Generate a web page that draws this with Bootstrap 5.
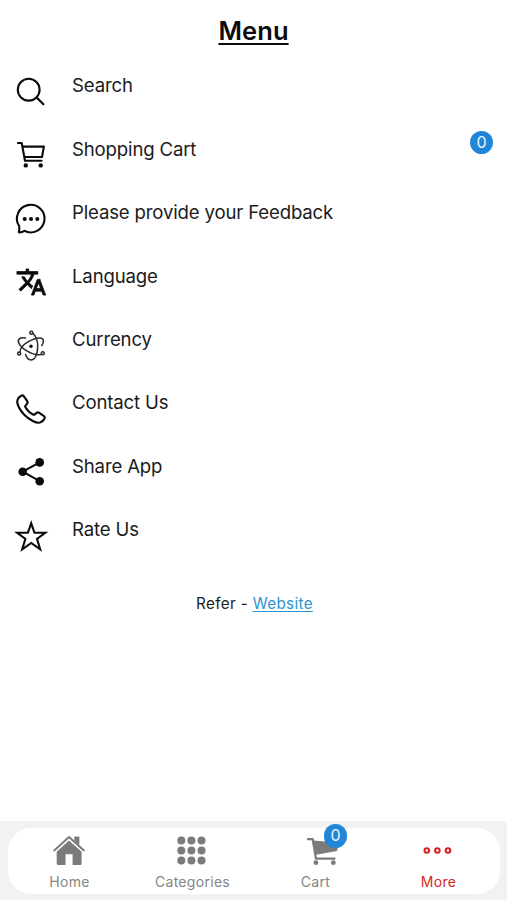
<!DOCTYPE html>
<html lang="en">
<head>
<meta charset="utf-8">
<meta name="viewport" content="width=device-width, initial-scale=1">
<title>Menu</title>
<link href="https://cdn.jsdelivr.net/npm/bootstrap@5.3.0/dist/css/bootstrap.min.css" rel="stylesheet">
<style>
body{font-family:Inter,sans-serif;color:#1b1b1b;height:900px;overflow:hidden}
.page-title{font-size:25.5px;font-weight:600;line-height:32px;padding-top:15px;height:60.3px;color:#0c0c0c;letter-spacing:.1px;text-decoration:underline;text-decoration-thickness:2px;text-underline-offset:3px;text-decoration-skip-ink:none}
.menu-row{height:63.4px;padding:13.7px 14px 0 13px}
.glyph{width:36px;height:36px;overflow:visible;flex:none;fill:none;stroke:#0a0a0a;stroke-width:2.1;stroke-linecap:round;stroke-linejoin:round}
.glyph .solid{fill:#0a0a0a;stroke:none}
.menu-text{font-size:18.6px;line-height:24px;letter-spacing:-.16px;margin-left:23px;margin-top:-.5px;white-space:nowrap}
.count{background:#2186d8;color:#e9f6ff;width:23px;height:23px;font-size:16px;line-height:23px;border-radius:50%;text-align:center}
.row-count{margin-top:-6px}
.refer{font-size:15.2px;line-height:20px;letter-spacing:.36px;margin-top:27px;padding-left:2px}
.refer a{color:#2b93cd;text-underline-offset:2px;text-decoration-skip-ink:none}
.dock{background:#f2f2f2;height:79px;padding:7px 7px 6px 8px}
.dock-pill{border-radius:23px;height:66px}
.dock-item{color:#858585;font-size:14px;letter-spacing:.3px;line-height:18px;padding-top:5px;text-decoration:none}
.dock-item .glyph{stroke:none;fill:#7b7b7b;margin-right:1.6px}
.dock-item.active{color:#d91f26}
.dock-item .caption{margin-top:4px}
.dock-count{position:absolute;left:27px;top:-9px;width:23.5px;height:23.5px;line-height:23.5px;letter-spacing:0}
</style>
<script src="https://cdn.jsdelivr.net/npm/bootstrap@5.3.0/dist/js/bootstrap.bundle.min.js"></script>
</head>
<body class="bg-white d-flex flex-column">
<h1 class="page-title text-center m-0">Menu</h1>
<main class="flex-grow-1">
<ul class="list-unstyled m-0">
<li class="menu-row d-flex align-items-start"><svg class="glyph" viewBox="0 0 36 36"><circle cx="15.7" cy="15.7" r="10.9"/><path d="M23.5 23.4L30.4 30.2" stroke-width="2.2"/></svg><span class="menu-text">Search</span></li>
<li class="menu-row d-flex align-items-start"><svg class="glyph" viewBox="0 0 36 36"><path d="M4.900 6H8.700L12 23.800H28.600M9.700 9.600H30.900L29 20H11.400"/><circle class="solid" cx="12.800" cy="28.400" r="2.200"/><circle class="solid" cx="27.700" cy="28.400" r="2.200"/></svg><span class="menu-text">Shopping Cart</span><span class="count row-count ms-auto">0</span></li>
<li class="menu-row d-flex align-items-start"><svg class="glyph" viewBox="0 0 36 36"><path d="M11.300 29.800C9.200 31.200 7.300 31.600 5.800 31.300C6.500 29.200 6.600 27.200 6.100 25A13.800 13.800 0 1 1 11.300 29.800Z"/><g class="solid"><circle cx="11.700" cy="17.900" r="2"/><circle cx="18" cy="17.900" r="2"/><circle cx="24.300" cy="17.900" r="2"/></g></svg><span class="menu-text">Please provide your Feedback</span></li>
<li class="menu-row d-flex align-items-start"><svg class="glyph" viewBox="0 0 36 36"><path transform="translate(2.6 2.3) scale(1.31)" fill="#0a0a0a" stroke-width=".55" d="M12.87 15.07l-2.54-2.51.03-.03c1.74-1.94 2.98-4.17 3.71-6.53H17V4h-7V2H8v2H1v1.99h11.17C11.5 7.92 10.44 9.75 9 11.35 8.07 10.32 7.3 9.19 6.69 8h-2c.73 1.63 1.73 3.17 2.98 4.56l-5.09 5.02L4 19l5-5 3.11 3.11.76-2.04zM18.5 10h-2L12 22h2l1.12-3h4.75L21 22h2l-4.500-12zm-2.620 7l1.620-4.330L19.120 17h-3.240z"/></svg><span class="menu-text">Language</span></li>
<li class="menu-row d-flex align-items-start"><svg class="glyph" viewBox="0 0 36 36"><g style="stroke:#2b2b2b;stroke-width:1.500"><path d="M20.100 5.600C23 8 24.700 13 24.700 18.500C24.700 22.700 23.800 26.500 22.300 29M12.600 26.500C13.600 30 15.600 31.900 18 31.900C19.400 31.900 20.600 31.300 21.500 30.200"/><path d="M7 24C7 20.500 10.500 16.500 15.300 13.600C19.500 11.100 24 9.700 27 9.900C30.900 10.200 31.500 13.500 28.700 17.500"/><path d="M28 26.400C24.500 27.300 19 25.800 14.300 23.100C10.500 20.900 7.300 18 5.900 15.300C4 11.500 6.800 9.200 12.500 10"/><circle cx="18.300" cy="4.800" r="1.500"/><circle cx="6.200" cy="25.500" r="1.500"/><circle cx="29.800" cy="25.300" r="1.500"/></g><circle class="solid" cx="18" cy="18.300" r="1.700"/></svg><span class="menu-text">Currency</span></li>
<li class="menu-row d-flex align-items-start"><svg class="glyph" viewBox="0 0 36 36"><path d="M4.400 9.300C5 7.200 6.700 5.400 8.600 4.500C9.500 4.100 10.200 4.400 10.900 5.300L14.100 9.900C15 11.300 14.800 12.300 13.600 13.300C12.500 14.200 11.800 14.800 12.500 16.200C14 19 17 22 20 23.500C21.300 24.100 21.900 23.600 22.800 22.500C23.800 21.200 24.900 21 26.300 21.900L31 25.100C31.900 25.800 32.100 26.500 31.600 27.500C30.700 29.300 28.900 31 26.900 31.600C23.500 32.400 16.500 29 11.500 24C6.500 19 3.500 12.600 4.400 9.300Z"/></svg><span class="menu-text">Contact Us</span></li>
<li class="menu-row d-flex align-items-start"><svg class="glyph" viewBox="0 0 36 36"><path d="M26.700 8.300L9.700 17.700L26.700 27.200"/><g class="solid"><circle cx="26.700" cy="8.400" r="4.300"/><circle cx="9.700" cy="17.700" r="4.300"/><circle cx="26.700" cy="27.200" r="4.300"/></g></svg><span class="menu-text">Share App</span></li>
<li class="menu-row d-flex align-items-start"><svg class="glyph" viewBox="0 0 36 36"><path style="stroke-linejoin:miter" d="M18.200 5.300L21.500 14.800H32.200L24 20.900L27.200 31.300L18.200 25L9.200 31.300L12.400 20.900L4.200 14.800H14.900Z"/></svg><span class="menu-text">Rate Us</span></li>
</ul>
<p class="refer text-center mb-0">Refer - <a href="#">Website</a></p>
</main>
<nav class="dock">
<div class="dock-pill bg-white d-flex">
<a class="dock-item col-3 d-flex flex-column align-items-center" href="#"><svg class="glyph" viewBox="0 0 36 36"><path d="M18 7.500L30.600 18.800V30.500Q30.600 32 29.100 32H21.600V21.300H14.500V32H7.200Q5.700 32 5.700 30.500V18.800Z"/><path d="M23.500 3.800H28.200V14L23.500 10Z"/><path d="M3.200 17.400L18 4.100L32.900 17.400" style="fill:none;stroke:#fff;stroke-width:3.800"/><path d="M23.500 3.800H28.200V12L23.500 8Z"/><path d="M3.200 17.400L18 4.100L32.900 17.400" style="fill:none;stroke:#7b7b7b;stroke-width:2"/></svg><span class="caption">Home</span></a>
<a class="dock-item col-3 d-flex flex-column align-items-center" href="#"><svg class="glyph" viewBox="0 0 36 36"><circle cx="7.300" cy="7.400" r="4"/><circle cx="17.400" cy="7.400" r="4"/><circle cx="27.500" cy="7.400" r="4"/><circle cx="7.300" cy="17.500" r="4"/><circle cx="17.400" cy="17.500" r="4"/><circle cx="27.500" cy="17.500" r="4"/><circle cx="7.300" cy="27.600" r="4"/><circle cx="17.400" cy="27.600" r="4"/><circle cx="27.500" cy="27.600" r="4"/></svg><span class="caption">Categories</span></a>
<a class="dock-item col-3 d-flex flex-column align-items-center" href="#"><span class="position-relative d-block lh-1"><svg class="glyph d-block" viewBox="0 0 36 36"><path d="M16.200 7.500L41.400 9.500L40.200 18L18.700 21.700Z"/><path d="M11 6.200H15.700L19 25.600H37.500" style="fill:none;stroke:#7b7b7b;stroke-width:2.300"/><circle cx="18.900" cy="29.700" r="2.400"/><circle cx="36.300" cy="29.700" r="2.400"/></svg><span class="count dock-count">0</span></span><span class="caption">Cart</span></a>
<a class="dock-item active col-3 d-flex flex-column align-items-center" href="#"><svg class="glyph" viewBox="0 0 36 36"><g style="fill:none;stroke:#d91f26;stroke-width:2"><circle cx="6.800" cy="17.500" r="2.300"/><circle cx="17.400" cy="17.500" r="2.300"/><circle cx="28" cy="17.500" r="2.300"/></g></svg><span class="caption">More</span></a>
</div>
</nav>
</body>
</html>
